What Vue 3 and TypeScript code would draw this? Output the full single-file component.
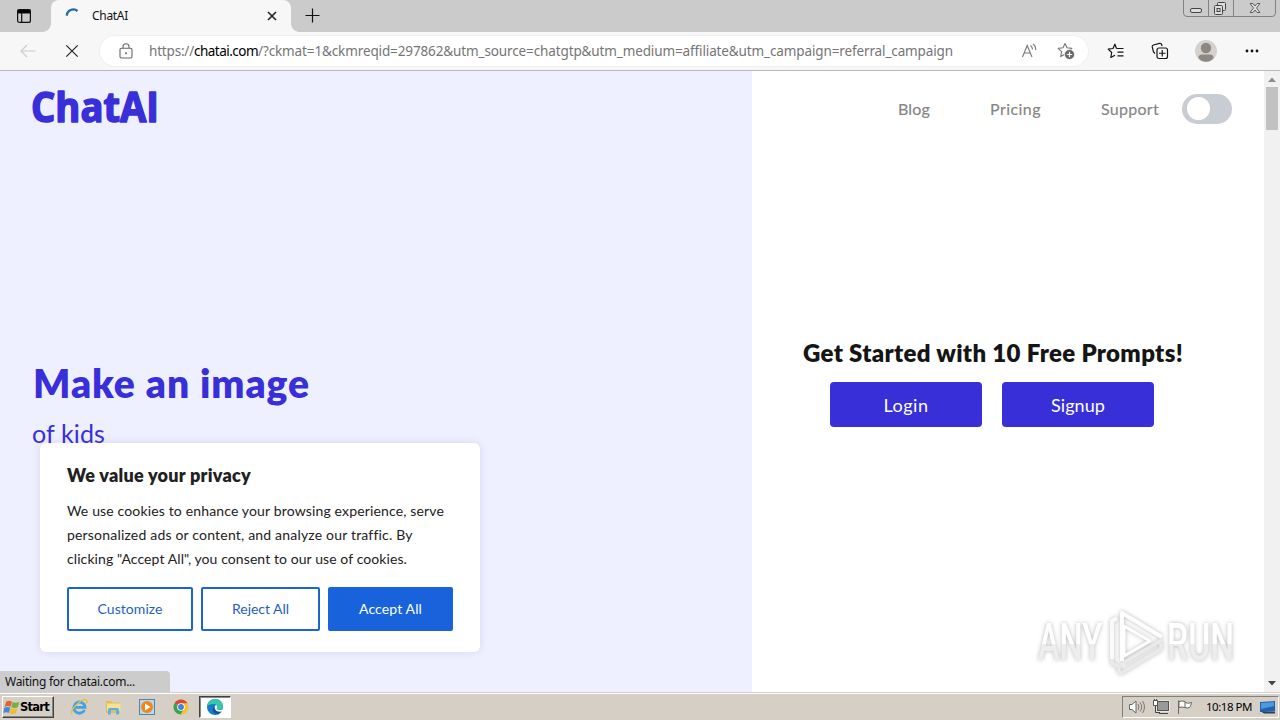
<script setup lang="ts">
import type { Directive } from 'vue'

interface TextLine { label: string; width: number }

const links: TextLine[] = [
  { label: 'Blog', width: 32 },
  { label: 'Pricing', width: 51 },
  { label: 'Support', width: 58 },
]

const notice: TextLine[] = [
  { label: 'We use cookies to enhance your browsing experience, serve', width: 377 },
  { label: 'personalized ads or content, and analyze our traffic. By', width: 345 },
  { label: 'clicking "Accept All", you consent to our use of cookies.', width: 340 },
]

// Tracks a line of text out or in until it has the given width.
const vFit: Directive<HTMLElement, number> = {
  mounted(el, { value }) {
    const length = (el.textContent ?? '').trim().length
    const natural = el.getBoundingClientRect().width
    el.style.letterSpacing = `${(value - natural) / length}px`
  },
}
</script>

<template>
  <div class="screen">
    <header class="tabs">
      <div class="tab-menu">
        <svg width="16" height="16" viewBox="0 0 16 16"><rect x="1.6" y="1.6" width="12.8" height="12.8" rx="2" fill="none" stroke="#111" stroke-width="1.2" /><path d="M2 2h12v3H2zM5.7 5v9" stroke="#111" stroke-width="1.2" /></svg>
      </div>
      <div class="tab">
        <svg class="spinner" width="16" height="16" viewBox="0 0 16 16"><path d="M1.8 7.6A6.5 6.5 0 0 1 12.5 3" fill="none" stroke="#236ba6" stroke-width="2.4" /></svg>
        <span class="tab-title"><span v-fit="36">ChatAI</span></span>
        <svg class="tab-close" width="10" height="10" viewBox="0 0 10 10"><path d="M1 1l8 8M9 1l-8 8" stroke="#222" stroke-width="1.6" /></svg>
      </div>
      <svg class="plus" width="15" height="15" viewBox="0 0 15 15"><path d="M7.5 .5v14M.5 7.5h14" stroke="#111" stroke-width="1.2" /></svg>
      <svg class="window-buttons" width="94" height="18" viewBox="0 0 94 18">
        <path d="M.5 0v13q0 3.5 3.5 3.5h85q3.5 0 3.5-3.5V0M25.5 0v16M50.5 0v16" fill="none" stroke="#828282" />
        <rect x="7.5" y="8.5" width="11" height="4" rx="1.5" fill="#ddd" stroke="#444" />
        <g fill="#ddd" stroke="#444"><rect x="34.5" y="2.5" width="8" height="8" rx="1" /><rect x="31.5" y="5.5" width="8" height="9" rx="1" /><rect x="34" y="8.5" width="3" height="3" /></g>
        <path d="M67 3.500h3l2 2.500 2-2.500h3l-3.500 4.500 3.500 4.500h-3l-2-2.500-2 2.500h-3l3.500-4.500z" fill="#ddd" stroke="#555" stroke-width=".9" />
      </svg>
    </header>

    <div class="toolbar">
      <svg class="back" width="18" height="16" viewBox="0 0 18 16"><path d="M16.500 8H2M8 2L2 8l6 6" fill="none" stroke="#ccc" stroke-width="1.200" /></svg>
      <svg class="stop" width="14" height="14" viewBox="0 0 14 14"><path d="M1.300 1.300l11.400 11.400M12.700 1.300L1.300 12.700" stroke="#222" stroke-width="1.200" /></svg>
      <div class="address">
        <svg class="lock" width="14" height="16" viewBox="0 0 14 16"><rect x="1" y="5.300" width="12" height="9.700" rx="1.500" fill="none" stroke="#666" stroke-width="1.100" /><path d="M4 5V3.700a3 3 0 0 1 6 0V5" fill="none" stroke="#666" stroke-width="1.100" /><circle cx="7" cy="10.200" r="1" fill="#666" /></svg>
        <span class="url"><span v-fit="45">https://</span><b v-fit="64">chatai.com</b><span v-fit="695">/?ckmat=1&amp;ckmreqid=297862&amp;utm_source=chatgtp&amp;utm_medium=affiliate&amp;utm_campaign=referral_campaign</span></span>
        <svg class="read" width="17" height="16" viewBox="0 0 17 16"><path d="M1.500 14L6.200 2.500 11 14M3.200 10h6.200M9.500 2.500q2 1.500 2 4M12 1q3 2.200 2.700 6" fill="none" stroke="#777" stroke-width="1.100" /></svg>
        <svg class="fav" width="18" height="18" viewBox="0 0 18 18"><path d="M8 1.500l2 4.300 4.800.6-3.500 3.300.8 4.700L8 12.200l-4.300 2.400.9-4.900L1.200 6.400 6 5.800z" fill="none" stroke="#777" stroke-width="1.100" stroke-linejoin="round" /><circle cx="12.500" cy="12.500" r="5" fill="#666" stroke="#fff" stroke-width=".8" /><path d="M12.500 9.800v5.400M9.800 12.500h5.400" stroke="#fff" stroke-width="1.200" /></svg>
      </div>
      <svg class="favorites" width="18" height="16" viewBox="0 0 18 16"><path d="M9.500 5.500L7.900 1.200 6 5.500l-4.800.6L4.700 9.500l-.9 5L8 12.200M9.500 5.500h7M10.500 9.200h6M10.500 12.800h6" fill="none" stroke="#151515" stroke-width="1.200" stroke-linejoin="round" /></svg>
      <svg class="collections" width="18" height="18" viewBox="0 0 18 18"><path d="M4 11.500L2.500 10 1.200 5Q1 3.500 2.500 3L8.500 1.300q1.300-.2 1.900.8l.7 2" fill="none" stroke="#151515" stroke-width="1.200" /><rect x="6" y="6" width="10.500" height="10.500" rx="2" fill="#f7f7f7" stroke="#151515" stroke-width="1.200" /><path d="M11.250 8v6.500M8 11.250h6.500" stroke="#151515" stroke-width="1.200" /></svg>
      <svg class="avatar" width="22" height="22" viewBox="0 0 22 22"><circle cx="11" cy="11" r="11" fill="#d4d1ce" /><circle cx="11" cy="8" r="5.200" fill="#8d8782" /><path d="M3.300 17.500Q4 14.500 7 14.500h8q3 0 3.700 3Q16 21.800 11 21.800t-7.700-4.300z" fill="#8d8782" /></svg>
      <svg class="more" width="14" height="4" viewBox="0 0 14 4"><g fill="#111"><circle cx="2" cy="2" r="1.400" /><circle cx="7" cy="2" r="1.400" /><circle cx="12" cy="2" r="1.400" /></g></svg>
    </div>

    <main class="page">
      <section class="hero">
        <svg class="logo" width="160" height="56" viewBox="0 0 160 56"><text x="-1" y="35" textLength="128" lengthAdjust="spacingAndGlyphs">ChatAI</text></svg>
        <h1><span v-fit="277">Make an image</span></h1>
        <p class="sub"><span v-fit="73">of kids</span></p>
      </section>
      <section class="side">
        <nav>
          <a v-for="l in links" :key="l.label"><span v-fit="l.width">{{ l.label }}</span></a>
          <span class="toggle"><i></i></span>
        </nav>
        <h2><span v-fit="380">Get Started with 10 Free Prompts!</span></h2>
        <div class="actions">
          <button><span v-fit="45">Login</span></button>
          <button><span v-fit="54">Signup</span></button>
        </div>
      </section>
      <div class="scrollbar">
        <svg width="16" height="16" viewBox="0 0 16 16"><path d="M4 11l4-4.500 4 4.500z" fill="#8d8d8d" /></svg>
        <div class="thumb"></div>
        <svg class="down" width="16" height="16" viewBox="0 0 16 16"><path d="M4 5l4 4.500L12 5z" fill="#444" /></svg>
      </div>

      <aside class="cookies">
        <h3><span v-fit="184">We value your privacy</span></h3>
        <p v-for="n in notice" :key="n.label"><span v-fit="n.width">{{ n.label }}</span></p>
        <div class="choices">
          <button class="customize"><span v-fit="65">Customize</span></button>
          <button class="reject"><span v-fit="57">Reject All</span></button>
          <button class="accept"><span v-fit="63">Accept All</span></button>
        </div>
      </aside>
      <div class="status"><span v-fit="130">Waiting for chatai.com...</span></div>
      <svg class="watermark" width="234" height="86" viewBox="0 0 234 86">
        <defs><linearGradient id="fade" x1="0" y1="0" x2="0" y2="1"><stop offset=".52" stop-color="#fff" /><stop offset=".52" stop-color="#ededed" /></linearGradient></defs>
        <text x="8" y="59" textLength="64" lengthAdjust="spacingAndGlyphs">ANY</text>
        <text x="137" y="59" textLength="67" lengthAdjust="spacingAndGlyphs">RUN</text>
        <g fill="none" stroke-linejoin="round">
          <path d="M82 58V20l5-3" stroke="#fafafa" stroke-width="4" />
          <path d="M92 60V12l40 24" stroke="#fdfdfd" stroke-width="4" />
          <path d="M94 55V25l26 15z" stroke="#fff" stroke-width="3" />
          <path d="M82 58v4l7 4M93 62l39-23M93 71l38-23v-6M89 64v7l4 1" stroke="#eaeaea" stroke-width="3.500" />
        </g>
      </svg>
    </main>

    <footer class="taskbar">
      <div class="start">
        <svg width="17" height="17" viewBox="0 0 16 16"><path d="M3 2.700Q5.500 .8 8.500 2.500L7.200 7.300Q4.500 6 1.500 7.500z" fill="#df6430" /><path d="M9.100 2.800q3 1.300 6.300 0l-1.600 5Q10.800 9.200 7.800 7.700z" fill="#78ae45" /><path d="M1.200 8.300q2.800-1.500 5.700-.2l-1.400 5q-2.600-1.300-5.200.2z" fill="#4788cf" /><path d="M7.500 8.600q3 1.300 6 0l-1.300 5q-3 1.500-6 .1z" fill="#efbd35" /></svg>
        <span v-fit="29">Start</span>
      </div>
      <svg class="ie" width="18" height="18" viewBox="0 0 18 18"><path d="M14.500 12A5.600 5.600 0 1 1 15 9.300H5" fill="none" stroke="#43a3de" stroke-width="2.800" /><path d="M2 16C-1.500 12.500 12 0 16.500 2q1.300 1-.5 4" fill="none" stroke="#e5bd48" stroke-width="1.300" /></svg>
      <svg class="folder" width="18" height="18" viewBox="0 0 18 18"><path d="M2 3h5l1.500 1.500H16V15H2z" fill="#e3bd58" /><path d="M3 5.500h13.500V13H3z" fill="#f5e096" /><path d="M4 16.500V12q0-2 2-2h7q2 0 2 2v4.500h-2.800v-4H6.800v4z" fill="#5eafd9" /></svg>
      <svg class="media" width="18" height="18" viewBox="0 0 18 18"><rect x="1.500" y="1.500" width="15" height="15" fill="#b9d8ec" stroke="#4b86af" /><circle cx="9" cy="9" r="6" fill="#f1861d" /><path d="M7 5.500l5.500 3.500L7 12.500z" fill="#fff" /></svg>
      <svg class="chrome" width="16" height="16" viewBox="0 0 16 16"><circle cx="8" cy="8" r="7.500" fill="#f4c329" /><path d="M8 8L1.500 4.200A7.500 7.500 0 0 1 14.500 4.300H8z" fill="#dd4636" /><path d="M8 8L1.500 4.200A7.500 7.500 0 0 0 7.500 15.500l3.200-5.600z" fill="#3aa257" /><circle cx="8" cy="8" r="3.800" fill="#fff" /><circle cx="8" cy="8" r="2.900" fill="#427fdf" /></svg>
      <div class="active">
        <svg width="18" height="18" viewBox="0 0 18 18"><circle cx="9" cy="9" r="8" fill="#167bcb" /><path d="M1.200 8C2 3 5.500 1 9 1c5 0 8 3.500 8 7 0 3-2.500 4-5 4-1.500 0-2-.8-1-1.800C12.500 7 8 4 1.200 8z" fill="#39c6aa" /><path d="M17.500 11.500C13 14 7.800 12.500 8 8.500 5.500 11 7 16 12.500 16.200z" fill="#124f9d" /><path d="M8.800 8.500c.3-1.700 2.700-1.500 2.400.6-.3 1.500-1.200 2.200 1 2.900 2.500.3 4-.3 5.300-1.500l.5 2c-2.500 1.500-5.500 1.500-7.300.5C9.200 12 8.500 10.300 8.800 8.500z" fill="#fff" /></svg>
      </div>
      <div class="tray">
        <svg class="sound" width="18" height="16" viewBox="0 0 18 16"><path d="M1.500 5.500H4L8 2v12l-4-3.500H1.500z" fill="#fff" stroke="#666" /><path d="M10 5q2 3 0 6M12 3.500q3.500 4.500 0 9M14.500 2q4 6 0 12" fill="none" stroke="#777" /></svg>
        <svg class="net" width="18" height="16" viewBox="0 0 18 16"><rect x="5.500" y="2.500" width="11" height="9" fill="#999" stroke="#fff" stroke-width="2" /><rect x="5.500" y="2.500" width="11" height="9" fill="#999" stroke="#555" /><path d="M7 14.500h9M3.500 6v7.500H8" fill="none" stroke="#444" /><path d="M1.500 1.500h4v5h-4zM2.500 0v2M4.500 0v2" fill="#fff" stroke="#555" /></svg>
        <svg class="flag" width="18" height="16" viewBox="0 0 18 16"><path d="M2.500 15V1.500M3 2.500q3-1 6 0v6q-3-1-6 0zM9 3.500q3 1.500 6.500 0-.5 3-2 5Q11 9.500 9 8.500" fill="#fff" stroke="#666" /></svg>
        <span class="clock"><span v-fit="46">10:18 PM</span></span>
        <svg class="desktop" width="16" height="14" viewBox="0 0 16 14"><path d="M0 2l15-1v10l-13 1H0z" fill="#2562ad" /><path d="M1 3l13-1v4L1 9z" fill="#4b9bdc" /><path d="M1 11.500h14v2H4z" fill="#27415e" /></svg>
      </div>
    </footer>
  </div>
</template>

<style>
body { overflow: hidden; }
</style>

<style scoped>
* { box-sizing: border-box; }
.screen { width: 1280px; height: 720px; display: flex; flex-direction: column; overflow: hidden; font-family: Lato, "Open Sans", sans-serif; }
svg { display: block; flex: none; }
span, b { white-space: nowrap; }
h1, h2, h3, p { margin: 0; }
button { font: inherit; padding: 0; border: 0; display: flex; align-items: center; justify-content: center; }

.tabs { height: 32px; flex: none; display: flex; background: #cbcbcb; }
.tab-menu { width: 51px; border-bottom-right-radius: 8px; padding: 8px 0 0 16px; }
.tab { width: 240px; background: #f7f7f7; border-radius: 8px 8px 0 0; display: flex; align-items: center; position: relative; }
.tab::before, .tab::after { content: ""; position: absolute; bottom: 0; width: 8px; height: 8px; }
.tab::before { left: -8px; background: radial-gradient(circle at 0 0, transparent 7.500px, #f7f7f7 8px); }
.tab::after { right: -8px; background: radial-gradient(circle at 100% 0, transparent 7.500px, #f7f7f7 8px); }
.spinner { margin-left: 14px; }
.tab-title { width: 118px; margin-left: 11px; font: 12px/16px "Noto Sans", sans-serif; color: #111; }
.tab-close { margin-left: 57px; }
.plus { margin: 8px 0 0 14px; }
.window-buttons { margin-left: auto; margin-right: 3px; }

.toolbar { height: 39px; flex: none; display: flex; align-items: center; background: #f7f7f7; border-bottom: 1px solid #b9b9bd; }
.back { margin-left: 19px; }
.stop { margin-left: 28px; }
.address { width: 988px; height: 30px; margin-left: 21px; border-radius: 15px; background: #fff; box-shadow: 0 0 0 1px #f0f0f0; display: flex; align-items: center; }
.lock { margin-left: 19px; }
.url { width: 804px; margin-left: 16px; font: 13.500px/20px "Noto Sans", sans-serif; color: #757575; display: flex; }
.url b { font-weight: 400; color: #000; }
.read { margin-left: 68px; }
.fav { margin-left: 19px; }
.favorites { margin-left: 19px; }
.collections { margin-left: 26px; }
.avatar { margin-left: 26px; }
.more { margin-left: 28px; }

.page { height: 621px; flex: none; display: flex; position: relative; }
.hero { width: 752px; background: #eff0ff; color: #382fd8; padding: 16px 32px 0; }
.logo { margin-bottom: -16px; }
.logo text { font: 700 41px "Open Sans", sans-serif; fill: #382fd8; stroke: #382fd8; stroke-width: 1.600; stroke-linejoin: round; }
h1 { margin: 231px 0 0 1px; font-size: 39px; line-height: 50px; font-weight: 800; }
.sub { font-size: 25px; line-height: 30px; margin-top: 10px; }
.side { width: 512px; background: #fff; }
nav { height: 76px; display: flex; align-items: center; justify-content: flex-end; gap: 60px; padding-right: 32px; color: #858585; font-size: 16px; line-height: 20px; -webkit-text-stroke: .15px #858585; }
nav a { position: relative; left: 1px; }
.toggle { width: 50px; height: 30px; margin-left: -36px; border-radius: 15px; background: #c8cdd3; padding: 3px 5px; }
.toggle i { display: block; width: 23px; height: 23px; border-radius: 50%; background: #fff; }
h2 { margin: 191px 0 0 51px; font-size: 24px; line-height: 30px; font-weight: 800; color: #151515; }
.actions { display: flex; gap: 20px; margin: 14px 0 0 78px; }
.actions button { width: 152px; height: 45px; border-radius: 4px; background: #382fd9; color: #fff; font-size: 18px; line-height: 22px; }
.scrollbar { width: 16px; background: #f1f1f1; display: flex; flex-direction: column; align-items: center; }
.thumb { width: 12px; height: 43px; background: #c1c1c1; }
.down { margin-top: auto; }

.cookies { position: absolute; left: 40px; top: 372px; width: 440px; height: 209px; padding: 20px 27px; border-radius: 6px; background: #fff; box-shadow: 0 0 10px rgba(80, 60, 150, .15); color: #212121; }
h3 { font-size: 18px; line-height: 25px; font-weight: 800; margin-bottom: 11px; }
.cookies p { font-size: 14px; line-height: 24px; }
.choices { display: flex; gap: 8px; margin-top: 16px; }
.choices button { height: 44px; border: 2px solid #1b63d8; border-radius: 2px; background: #fff; color: #1f5fc0; font-size: 14px; line-height: 20px; }
.choices .customize { width: 126px; }
.choices .reject { width: 119px; }
.choices .accept { width: 125px; color: #fff; background: #1863dc; }
.status { position: absolute; left: 0; bottom: 0; width: 170px; height: 21px; border-top-right-radius: 4px; background: #ccc; padding-left: 5px; font: 12px/21px "Noto Sans", sans-serif; color: #111; }
.watermark { position: absolute; left: 1030px; top: 530px; filter: drop-shadow(0 0 2px rgba(0, 0, 0, .28)); }
.watermark text { font: 500 52px Roboto, sans-serif; fill: url(#fade); }

.taskbar { height: 28px; flex: none; display: flex; align-items: flex-start; background: #d5cfc6; border-top: 1px solid #d4d0c8; box-shadow: inset 0 1px #fff; padding-top: 3px; }
.start { width: 52px; height: 22px; margin-left: 2px; border: 1px solid; border-color: #fff #404040 #404040 #fff; box-shadow: inset -1px -1px #888; display: flex; align-items: center; font: bold 11.500px/16px "DejaVu Sans", sans-serif; color: #000; }
.start svg { margin: 0; }
.ie { margin: 2px 0 0 16px; }
.folder { margin: 2px 0 0 16px; }
.media { margin: 2px 0 0 16px; }
.chrome { margin: 3px 0 0 17px; }
.active { width: 32px; height: 22px; margin-left: 10px; background: #fff; border: 1px solid; border-color: #404040 #fff #fff #404040; box-shadow: inset 1px 1px #888; padding: 1px 0 0 6px; }
.tray { width: 157px; height: 22px; margin-left: auto; margin-right: 1px; border: 1px solid; border-color: #808080 #fff #fff #808080; display: flex; align-items: center; }
.sound { margin-left: 5px; }
.net { margin-left: 6px; }
.flag { margin-left: 6px; }
.clock { width: 46px; margin-left: 12px; font: 11.500px/16px "Noto Sans", sans-serif; color: #000; }
.desktop { margin-left: 8px; }
</style>
